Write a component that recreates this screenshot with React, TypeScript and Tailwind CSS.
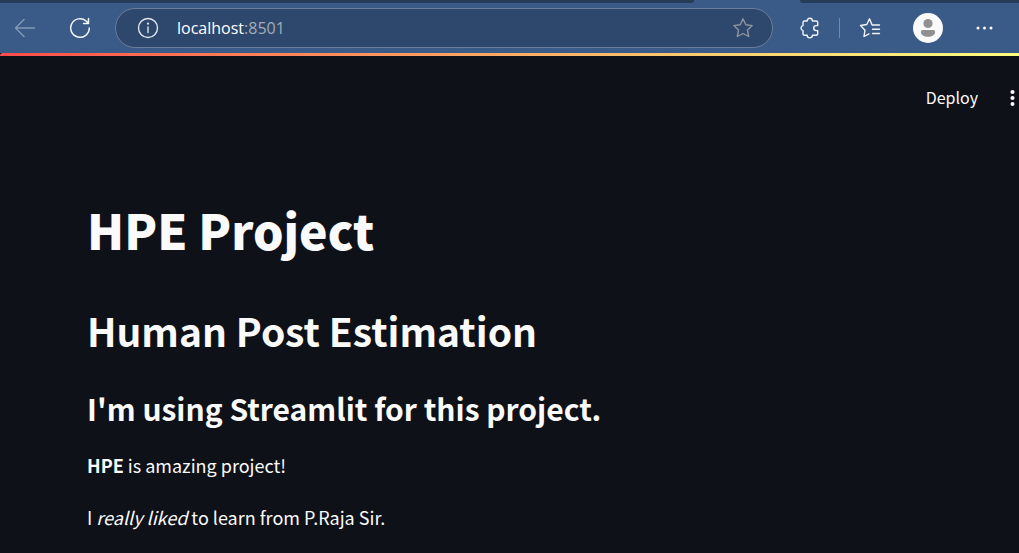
import type { ReactNode } from "react";

function IconButton({ label, className = "", children }: { label: string; className?: string; children: ReactNode }) {
  return (
    <button type="button" aria-label={label} className={`flex shrink-0 items-center justify-center ${className}`}>
      {children}
    </button>
  );
}

function BackIcon() {
  return (
    <svg width="22" height="20" viewBox="0 0 22 20" fill="none" stroke="#839ab9" strokeWidth="1.4" strokeLinecap="round" strokeLinejoin="round">
      <path d="M20.500 10H1.500M10 1.500L1.500 10l8.500 8.500" />
    </svg>
  );
}

function RefreshIcon() {
  return (
    <svg width="22" height="22" viewBox="0 0 22 22" fill="none" stroke="#f4f7fb" strokeWidth="1.5" strokeLinecap="round" strokeLinejoin="round">
      <path d="M20.300 11a9.300 9.300 0 1 1-3.200-7L19.300 6.200M19.500 1.500v5h-5" />
    </svg>
  );
}

function InfoIcon() {
  return (
    <svg width="22" height="22" viewBox="0 0 22 22" fill="none" stroke="#dfe5ee" strokeWidth="1.4" strokeLinecap="round">
      <circle cx="11" cy="11" r="9.500" />
      <path d="M11 10v5.500" />
      <circle cx="11" cy="6.700" r="1.100" fill="#dfe5ee" stroke="none" />
    </svg>
  );
}

function StarIcon() {
  return (
    <svg width="22" height="22" viewBox="0 0 22 22" fill="none" stroke="#8f949d" strokeWidth="1.4" strokeLinejoin="round">
      <path d="M11 1.800l2.800 5.900 6.400.9-4.700 4.500 1.200 6.400L11 16.500l-5.700 3 1.200-6.400L1.800 8.600l6.400-.9z" />
    </svg>
  );
}

function PuzzleIcon() {
  return (
    <svg width="20" height="22" viewBox="0 0 20 22" fill="none" stroke="#f1f5fa" strokeWidth="1.4" strokeLinejoin="round">
      <path d="M4.500 4h2.700C7.200 2.400 8.300 1.300 9.800 1.300s2.600 1.100 2.600 2.700H16.200a1.500 1.500 0 0 1 1.500 1.500V8.600h-1.500a2.500 2.500 0 0 0 0 5h1.500v3.200a1.500 1.500 0 0 1-1.500 1.500h-3.800c0 1.500-1.100 2.600-2.600 2.600s-2.600-1.100-2.600-2.600H4.500A1.500 1.500 0 0 1 3 16.800v-3.200c-1.100-.2-2-1.200-2-2.500s.9-2.300 2-2.500V5.500A1.500 1.500 0 0 1 4.500 4z" />
    </svg>
  );
}

function FavoritesIcon() {
  return (
    <svg width="22" height="22" viewBox="0 0 22 22" fill="none" stroke="#f1f5fa" strokeWidth="1.400" strokeLinecap="round" strokeLinejoin="round">
      <path d="M20.500 8h-7.400L10.500 1.800 7.800 7.500l-6.300 1 4.500 4.700-1 6.300 5-2.600" />
      <path d="M13.500 12.200h7M13.500 16.500h7" />
    </svg>
  );
}

function Avatar() {
  return (
    <svg width="30" height="30" viewBox="0 0 30 30">
      <circle cx="15" cy="15" r="15" fill="#fafafa" />
      <circle cx="15" cy="10.500" r="4.600" fill="#909090" />
      <path d="M9.700 17h10.600a1.800 1.800 0 0 1 1.800 1.800c0 3.300-3.200 5-7.100 5s-7.100-1.700-7.100-5A1.800 1.800 0 0 1 9.700 17z" fill="#909090" />
    </svg>
  );
}

function BrowserBar() {
  return (
    <header className="bg-[#3a5a87]">
      <div className="flex h-[3px]">
        <div className="flex-1 rounded-br-[3px] bg-[#263c57]" />
        <div className="w-[106px]" />
        <div className="w-[219px] rounded-bl-[3px] bg-[#263c57]" />
      </div>
      <nav className="flex h-[50px] items-center pr-[25px] pl-[14px]">
        <IconButton label="Back"><BackIcon /></IconButton>
        <IconButton label="Refresh" className="ml-[33px]"><RefreshIcon /></IconButton>
        <div className="ml-6 flex h-10 min-w-0 flex-1 items-center rounded-full border border-[#6c7e98] bg-[#2e486d] pr-[18px] pl-[21px]">
          <IconButton label="Site information"><InfoIcon /></IconButton>
          <a href="http://localhost:8501" className="ml-[18px] flex-1 font-['Open_Sans',sans-serif] text-base leading-6 text-[#a3acb9]">
            <span className="text-white">localhost</span>:8501
          </a>
          <IconButton label="Add to favorites"><StarIcon /></IconButton>
        </div>
        <IconButton label="Extensions" className="ml-[27px]"><PuzzleIcon /></IconButton>
        <div className="ml-[19px] h-5 w-px bg-[#7189ab]" />
        <IconButton label="Favorites" className="ml-[19px]"><FavoritesIcon /></IconButton>
        <IconButton label="Profile" className="ml-8"><Avatar /></IconButton>
        <IconButton label="Settings and more" className="ml-[33px]">
          <svg width="18" height="4" viewBox="0 0 18 4" fill="#ffffff">
            <circle cx="2" cy="2" r="1.500" />
            <circle cx="8.500" cy="2" r="1.500" />
            <circle cx="15" cy="2" r="1.500" />
          </svg>
        </IconButton>
      </nav>
    </header>
  );
}

export default function App() {
  return (
    <div className="flex min-h-screen flex-col bg-[#0e1117] font-['Noto_Sans_CJK_SC',sans-serif] text-[#fafafa]">
      <BrowserBar />
      <div className="h-[3px] rounded-tl bg-linear-to-r from-[#ff4b4b] to-[#fffd80]" />
      <div className="flex items-center justify-end gap-8 pt-[29px]">
        <button type="button" className="text-base leading-6">Deploy</button>
        <IconButton label="Main menu" className="pr-1">
          <svg width="5" height="18" viewBox="0 0 5 18" fill="#fafafa">
            <circle cx="2.500" cy="4" r="2.100" />
            <circle cx="2.500" cy="10" r="2.100" />
            <circle cx="2.500" cy="16" r="2" />
          </svg>
        </IconButton>
      </div>
      <main className="px-[87px] pt-[90px]">
        <h1 className="text-[48px] leading-[60px] font-black">HPE Project</h1>
        <h2 className="mt-11 text-[39px] leading-[54px] font-bold">Human Post Estimation</h2>
        <h3 className="mt-[30px] text-[30px] leading-[42px] font-bold">I'm using Streamlit for this project.</h3>
        <p className="mt-5 text-lg leading-8"><strong className="font-bold">HPE</strong> is amazing project!</p>
        <p className="mt-5 text-lg leading-8">I <em>really liked</em> to learn from P.Raja Sir.</p>
      </main>
    </div>
  );
}
